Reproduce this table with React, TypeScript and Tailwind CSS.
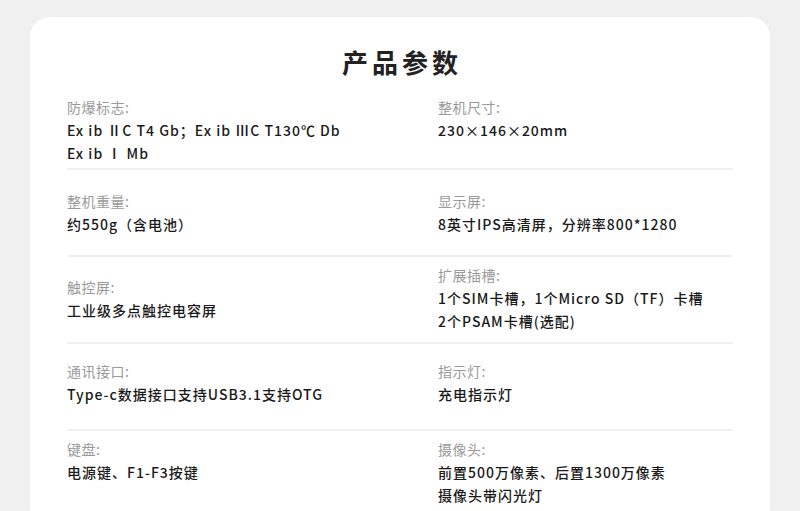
/*
  Spec sheet — "产品参数" card with a two-column grid of label / value pairs.
*/
const font = "font-['Noto_Sans_CJK_SC','Noto_Sans',sans-serif]";

type Spec = { label: string; lines: string[] };

const rows: { left: Spec; right: Spec; cls: string }[] = [
  {
    left: { label: "防爆标志:", lines: ["Ex ib ⅡC T4 Gb；Ex ib ⅢC T130℃ Db", "Ex ib Ⅰ Mb"] },
    right: { label: "整机尺寸:", lines: ["230×146×20mm"] },
    cls: "h-[79px] items-start pt-[5px]",
  },
  {
    left: { label: "整机重量:", lines: ["约550g（含电池）"] },
    right: { label: "显示屏:", lines: ["8英寸IPS高清屏，分辨率800*1280"] },
    cls: "h-[87px] items-center",
  },
  {
    left: { label: "触控屏:", lines: ["工业级多点触控电容屏"] },
    right: { label: "扩展插槽:", lines: ["1个SIM卡槽，1个Micro SD（TF）卡槽", "2个PSAM卡槽(选配)"] },
    cls: "h-[87px] items-center pb-[2px]",
  },
  {
    left: { label: "通讯接口:", lines: ["Type-c数据接口支持USB3.1支持OTG"] },
    right: { label: "指示灯:", lines: ["充电指示灯"] },
    cls: "h-[87px] items-center pb-[7px]",
  },
  {
    left: { label: "键盘:", lines: ["电源键、F1-F3按键"] },
    right: { label: "摄像头:", lines: ["前置500万像素、后置1300万像素", "摄像头带闪光灯"] },
    cls: "items-start pt-[7px] pb-[20px]",
  },
];

function Cell({ spec }: { spec: Spec }) {
  return (
    <div className="flex flex-col leading-[23px] text-[14px]">
      <span className="text-[#9a9a9a] tracking-[0.5px]">{spec.label}</span>
      {spec.lines.map((l) => (
        <span key={l} className="font-medium text-[#1a1a1a] tracking-[1px]">
          {l}
        </span>
      ))}
    </div>
  );
}

export default function App() {
  return (
    <div className={`min-h-screen bg-[#f0f0f0] pt-[17px] px-[30px] ${font}`}>
      <div className="bg-white rounded-[20px] px-[37px] pt-[26px]">
        {/* ── Title ───────────────────────────────────── */}
        <h1 className="h-[48px] text-center text-[26px] leading-[38px] font-bold text-[#222] tracking-[4px] pl-[4px]">
          产品参数
        </h1>

        {/* ── Spec rows ───────────────────────────────── */}
        {rows.map((r, i) => (
          <div
            key={i}
            className={`grid grid-cols-[371px_1fr] ${r.cls} ${i < rows.length - 1 ? "border-b-2 border-[#f0f0f0]" : ""}`}
          >
            <Cell spec={r.left} />
            <Cell spec={r.right} />
          </div>
        ))}
      </div>
    </div>
  );
}
